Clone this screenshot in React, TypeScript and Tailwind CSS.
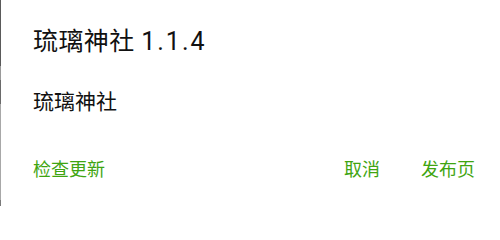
import React from "react";

const font = { fontFamily: '"Roboto", "Noto Sans CJK SC", sans-serif' };

function EdgeStrip() {
  // the screen edge peeking out on the left
  return (
    <div className="flex w-px flex-col">
      <div className="h-[66px] bg-[#5a5a5a]" />
      <div className="h-[14px] bg-[#9a9a9a]" />
      <div className="h-[24px] bg-[#6a6a6a]" />
      <div className="h-[96px] bg-[#a8a8a8]" />
      <div className="flex-1 bg-[#7a7a7a]" />
    </div>
  );
}

export default function App() {
  return (
    <div className="flex h-[206px] w-[500px] bg-white" style={font}>
      <EdgeStrip />
      <div className="flex flex-1 flex-col pl-[32px] pr-[25px] pt-[26px]">
        <p className="text-[25px] leading-[32px] tracking-[0.4px] text-[#111]">
          琉璃神社 <span className="tracking-[2px]">1.1.4</span>
        </p>
        <p className="mt-[30px] text-[21px] leading-[28px] text-[#111]">琉璃神社</p>
        <div className="mt-[42px] flex items-center text-[18px] leading-[24px] text-[#3fa511]">
          <button className="">检查更新</button>
          <div className="flex-1" />
          <button className="">取消</button>
          <button className="ml-[41px]">发布页</button>
        </div>
      </div>
    </div>
  );
}
